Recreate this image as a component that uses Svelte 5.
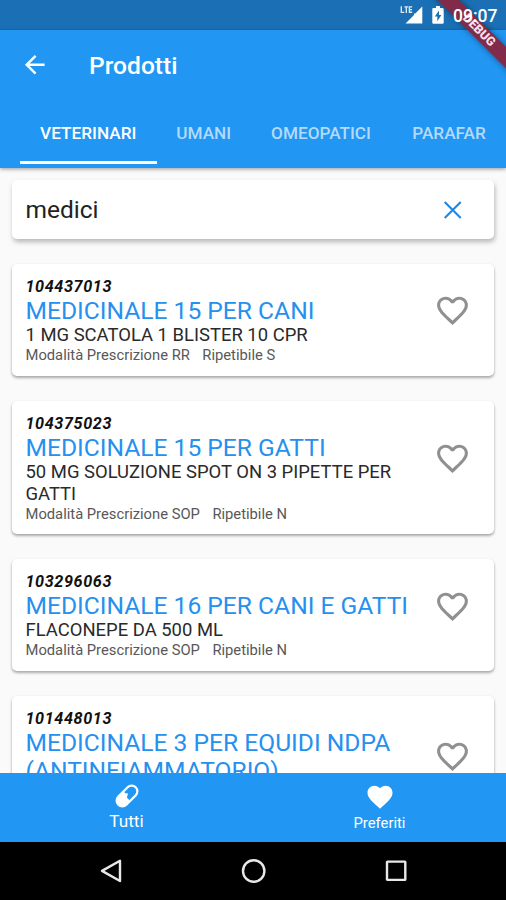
<script>
  const tabs = [
    { label: 'VETERINARI', width: 136.5, active: true },
    { label: 'UMANI', width: 94.5 },
    { label: 'OMEOPATICI', width: 140 },
    { label: 'PARAFAR', width: 116 }
  ];
  const products = [
    { code: '104437013', name: ['MEDICINALE 15 PER CANI'], desc: ['1 MG SCATOLA 1 BLISTER 10 CPR'], presc: 'RR', rip: 'S', height: 112, heart: 46 },
    { code: '104375023', name: ['MEDICINALE 15 PER GATTI'], desc: ['50 MG SOLUZIONE SPOT ON 3 PIPETTE PER', 'GATTI'], presc: 'SOP', rip: 'N', height: 133, heart: 56.5 },
    { code: '103296063', name: ['MEDICINALE 16 PER CANI E GATTI'], desc: ['FLACONEPE DA 500 ML'], presc: 'SOP', rip: 'N', height: 111.5, heart: 46.5 },
    { code: '101448013', name: ['MEDICINALE 3 PER EQUIDI NDPA', '(ANTINFIAMMATORIO)'], desc: [], height: 140, heart: 60 }
  ];
  const heart = 'M12 21.35l-1.45-1.32C5.4 15.36 2 12.28 2 8.5 2 5.42 4.42 3 7.5 3c1.74 0 3.41.81 4.5 2.09C13.09 3.81 14.76 3 16.5 3 19.58 3 22 5.42 22 8.5c0 3.78-3.4 6.86-8.55 11.54L12 21.35z';
  const heartOutline = 'M16.5 3c-1.74 0-3.41.81-4.5 2.09C10.91 3.81 9.24 3 7.5 3 4.42 3 2 5.42 2 8.5c0 3.78 3.4 6.86 8.55 11.54L12 21.35l1.45-1.32C18.6 15.36 22 12.28 22 8.5 22 5.42 19.58 3 16.5 3zm-4.4 15.55l-.1.1-.1-.1C7.14 14.24 4 11.39 4 8.5 4 6.5 5.5 5 7.5 5c1.54 0 3.04.99 3.57 2.36h1.87C13.46 5.99 14.96 5 16.5 5c2 0 3.5 1.5 3.5 3.5 0 2.89-3.14 5.74-7.9 10.05z';
</script>

<div class="screen">
  <div class="status">
    <svg class="signal" width="24" height="20" viewBox="0 0 24 20">
      <path d="M23.3 1.5V18.5H6.5L15 9.9V8.6H16.3Z" fill="#fff" />
      <path d="M2.3 1.2v6.2h3M5.4 1.9h3.8M7.3 1.9v6M13.2 1.9H10.4v5.4h2.8M10.4 4.6h2.6" fill="none" stroke="#d9e9f6" stroke-width="1.4" />
    </svg>
    <svg class="battery" width="12" height="18" viewBox="0 0 12 18">
      <path d="M4 0h4v2h2.6q1.1 0 1.1 1.1v13.6q0 1.1-1.1 1.1H1.4q-1.1 0-1.1-1.1V3.1Q.3 2 1.4 2H4Z" fill="#fff" />
      <path d="M7 4.5L2.8 10.5H5.3V15.3L9.4 9.1H7Z" fill="#1b70b5" />
    </svg>
    <span class="clock">09:07</span>
  </div>
  <div class="ribbon">DEBUG</div>

  <header>
    <div class="bar">
      <svg class="back" width="29.5" height="29.5" viewBox="0 0 24 24"><path d="M20 11H7.83l5.59-5.59L12 4l-8 8 8 8 1.41-1.41L7.83 13H20v-2z" fill="#fff" /></svg>
      <h1>Prodotti</h1>
    </div>
    <nav class="tabs">
      {#each tabs as t}
        <div class="tab" class:active={t.active} style:width="{t.width}px"><span>{t.label}</span></div>
      {/each}
    </nav>
  </header>

  <main>
    <div class="card search">
      <span class="query">medici</span>
      <svg class="clear" width="30" height="30" viewBox="0 0 30 30"><path d="M6.7 7L22.7 23M22.7 7L6.7 23" stroke="#1e88e5" stroke-width="2.1" fill="none" /></svg>
    </div>
    {#each products as p}
      <article class="card product" style:height="{p.height}px">
        <div class="info">
          <div class="code"><span>{p.code}</span></div>
          {#each p.name as line}<div class="name"><span>{line}</span></div>{/each}
          {#each p.desc as line}<div class="desc"><span>{line}</span></div>{/each}
          {#if p.presc}
            <div class="meta"><span>Modalità Prescrizione {p.presc}</span><span>Ripetibile {p.rip}</span></div>
          {/if}
        </div>
        <svg class="fav" style:margin-top="{p.heart - 18}px" width="37" height="37" viewBox="0 0 24 24"><path d={heartOutline} fill="#909090" /></svg>
      </article>
    {/each}
  </main>

  <footer>
    <div class="item">
      <svg width="28" height="28" viewBox="0 0 28 28">
        <g transform="rotate(45 14 14)">
          <rect x="8.3" y="1.7" width="11.4" height="24.6" rx="5.7" fill="none" stroke="#fff" stroke-width="2.2" />
          <path d="M8 13.2H11L13 11.4 15 15.2H20V20a6 6 0 0 1-12 0Z" fill="#fff" />
        </g>
      </svg>
      <span class="all">Tutti</span>
    </div>
    <div class="item">
      <svg width="30" height="30" viewBox="0 0 24 24"><path d={heart} fill="#fff" /></svg>
      <span class="pref">Preferiti</span>
    </div>
  </footer>

  <div class="system">
    <svg width="26" height="26" viewBox="0 0 26 26"><path d="M22 2.8V23L4 12.9Z" /></svg>
    <svg width="26" height="26" viewBox="0 0 26 26"><circle cx="12.7" cy="13" r="10.7" /></svg>
    <svg width="26" height="26" viewBox="0 0 26 26"><rect x="4" y="3.6" width="18.3" height="18.3" rx="0.5" /></svg>
  </div>
</div>

<style>
  .screen {
    position: relative;
    width: 506px;
    height: 900px;
    overflow: hidden;
    display: flex;
    flex-direction: column;
    background: #fafafa;
    font-family: Roboto, 'Liberation Sans', sans-serif;
    color: #222;
  }
  .screen span { white-space: nowrap; }
  svg { display: block; flex: none; }
  .status {
    height: 30px;
    flex: none;
    display: flex;
    align-items: center;
    justify-content: flex-end;
    padding-right: 9px;
    box-sizing: border-box;
    background: #1b70b5;
  }
  .signal { margin-right: 9px; }
  .battery { margin-right: 9px; }
  .clock {
    position: relative;
    z-index: 4;
    width: 44px;
    padding-top: 2px;
    font-size: 17.5px;
    font-weight: 500;
    line-height: 30px;
    color: #fff;
  }
  .ribbon {
    position: absolute;
    z-index: 3;
    left: 418.5px;
    top: 23px;
    width: 120px;
    height: 14.5px;
    transform: rotate(45deg);
    background: #822a49;
    box-shadow: 0 0 6px rgba(0, 0, 0, 0.45);
    color: #f3dfe6;
    text-align: center;
    font-size: 12.5px;
    font-weight: 900;
    line-height: 14.5px;
  }
  header {
    position: relative;
    z-index: 2;
    height: 137.5px;
    margin-bottom: -0.5px;
    flex: none;
    background: #2196f3;
    color: #fff;
    box-shadow: 0 1px 4px rgba(0, 0, 0, 0.4);
  }
  .bar { height: 70px; display: flex; align-items: center; padding-left: 20px; }
  h1 { margin: 1px 0 0 39.5px; font-size: 24.6px; font-weight: 500; line-height: 30px; }
  .tabs { display: flex; height: 63.5px; padding-left: 20px; }
  .tab {
    flex: none;
    box-sizing: border-box;
    text-align: center;
    font-size: 17.2px;
    font-weight: 500;
    line-height: 66px;
    color: #b4dafa;
  }
  .tab.active { color: #fff; border-bottom: 3px solid #fff; }
  main { flex: 1; min-height: 0; overflow: hidden; padding: 13px 12px 0; }
  .card {
    display: flex;
    box-sizing: border-box;
    background: #fff;
    border-radius: 5px;
    box-shadow: 0 2px 3px rgba(0, 0, 0, 0.28), 0 1px 3px rgba(0, 0, 0, 0.1);
    margin-bottom: 25px;
    padding-left: 13.5px;
  }
  .search {
    height: 59px;
    align-items: center;
    justify-content: space-between;
    padding-right: 26.5px;
    box-shadow: 1px 3px 5px rgba(0, 0, 0, 0.27);
  }
  .query { font-size: 24.5px; }
  .info { flex: 1; padding-top: 13px; }
  .code { height: 20px; line-height: 20px; font-size: 16.2px; letter-spacing: 0.6px; font-weight: 700; font-style: italic; color: #111; }
  .name { height: 27.5px; line-height: 28px; font-size: 24.6px; color: #2590ee; }
  .name + .name { padding-top: 0.5px; }
  .desc { height: 22px; line-height: 21.5px; font-size: 18.45px; color: #2a2a2a; }
  .meta { height: 18px; line-height: 16.6px; font-size: 14.76px; color: #585858; display: flex; gap: 12.5px; }
  .fav { margin-right: 23px; }
  footer { height: 69px; flex: none; display: flex; background: #2196f3; color: #fff; }
  .item { width: 253px; display: flex; flex-direction: column; align-items: center; padding-top: 9px; }
  .all { font-size: 17.2px; line-height: 22px; }
  .pref { font-size: 14.8px; line-height: 22px; }
  .system { height: 58px; flex: none; display: flex; align-items: center; justify-content: space-between; padding: 0 97px 0 98px; background: #000; }
  .system path, .system circle, .system rect { fill: none; stroke: #e8e8e8; stroke-width: 2.4; stroke-linejoin: round; }
</style>
